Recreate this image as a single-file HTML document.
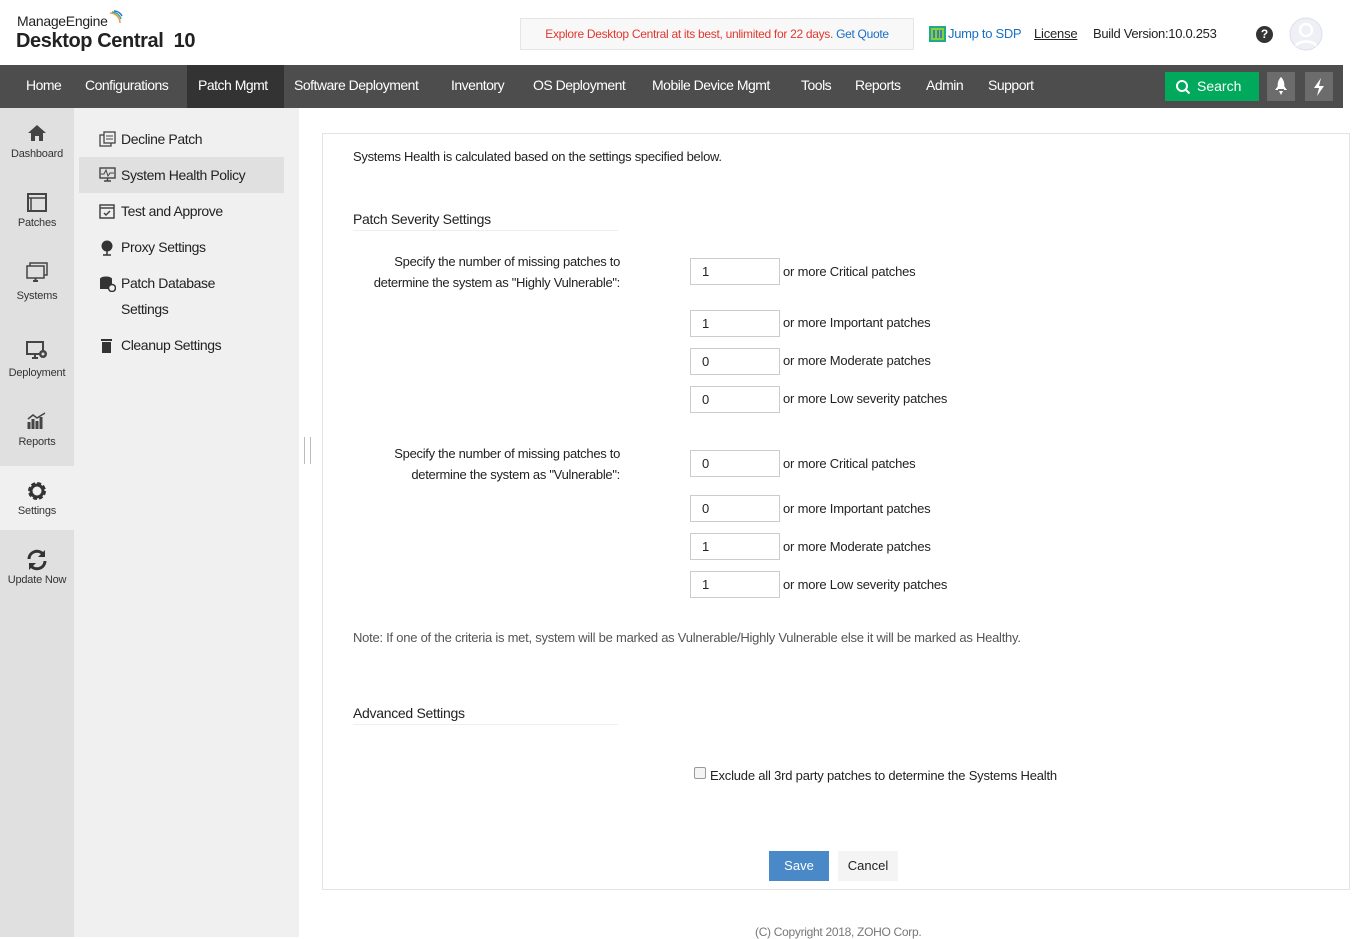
<!DOCTYPE html>
<html><head><meta charset="utf-8"><style>
*{box-sizing:border-box;margin:0;padding:0}
body{width:1360px;height:937px;overflow:hidden;background:#fff;font-family:"Liberation Sans",sans-serif;color:#222;position:relative;font-size:13px}
.a{position:absolute;white-space:nowrap}
.nav{position:absolute;left:0;top:65px;width:1343px;height:43px;background:#4d4d4d}
.nav span{position:absolute;top:0;height:43px;line-height:41px;color:#fff;font-size:14px;letter-spacing:-0.5px}
.lb{position:absolute;left:0;top:108px;width:74px;height:829px;background:#e0e0e0}
.li{position:absolute;left:0;width:74px;text-align:center;font-size:11px;color:#333;letter-spacing:-0.2px}
.sm{position:absolute;left:74px;top:108px;width:225px;height:829px;background:#f0f0f0}
.si{position:absolute;left:121px;font-size:14px;color:#222;letter-spacing:-0.4px}
.panel{position:absolute;left:322px;top:133px;width:1028px;height:757px;border:1px solid #e3e3e3}
.inp{position:absolute;left:690px;width:90px;height:27px;border:1px solid #ccc;padding-left:11px;line-height:25px;font-size:13px}
.lab{position:absolute;left:783px;font-size:13px;letter-spacing:-0.2px}
.r{position:absolute;right:740px;text-align:right;font-size:13px;line-height:21px;letter-spacing:-0.3px}
svg{position:absolute}
</style></head><body>
<div class="a" style="left:17px;top:13px;font-size:14px;color:#222;letter-spacing:-0.3px">ManageEngine</div>
<svg style="left:107px;top:10px" width="16" height="16" viewBox="0 0 16 16"><path d="M3 3 A10 10 0 0 1 13 13" stroke="#e94" stroke-width="1.5" fill="none"/><path d="M5 2 A10 10 0 0 1 14 9" stroke="#3a9" stroke-width="1.5" fill="none"/><path d="M7 1 A9 9 0 0 1 15 6" stroke="#27c" stroke-width="1.5" fill="none"/></svg>
<div class="a" style="left:16px;top:30px;font-size:20px;color:#222;letter-spacing:-0.4px;font-weight:bold;-webkit-text-stroke:0;font-weight:600">Desktop Central&nbsp; 10</div>
<div class="a" style="left:520px;top:18px;width:394px;height:32px;background:#f8f8f8;border:1px solid #e5e5e5;text-align:center;line-height:30px;font-size:12px;color:#e2382f;letter-spacing:-0.3px">Explore Desktop Central at its best, unlimited for 22 days. <span style="color:#1a6fc3">Get Quote</span></div>
<svg style="left:929px;top:26px" width="17" height="16" viewBox="0 0 17 16"><rect x="1" y="1" width="15" height="14" fill="#8c4" stroke="#2a8" stroke-width="2"/><path d="M5 4v8M9 4v8M12 4v8" stroke="#1a6fc3" stroke-width="1.5"/></svg>
<div class="a" style="left:948px;top:26px;font-size:13px;color:#1a6fc3;letter-spacing:-0.3px">Jump to SDP</div>
<div class="a" style="left:1034px;top:26px;font-size:13px;text-decoration:underline;letter-spacing:-0.2px">License</div>
<div class="a" style="left:1093px;top:26px;font-size:13px;letter-spacing:-0.3px">Build Version:10.0.253</div>
<div class="a" style="left:1256px;top:26px;width:17px;height:17px;border-radius:50%;background:#333;color:#fff;font-size:12px;font-weight:bold;text-align:center;line-height:17px">?</div>
<svg style="left:1289px;top:17px" width="34" height="34" viewBox="0 0 34 34"><circle cx="17" cy="17" r="16" fill="#eef0f5" stroke="#dde"/><circle cx="17" cy="13" r="6" fill="none" stroke="#fff" stroke-width="2.5"/><path d="M7 29c2-6 18-6 20 0" fill="none" stroke="#fff" stroke-width="2.5"/></svg>
<div class="nav">
<span style="left:26px">Home</span><span style="left:85px">Configurations</span>
<span style="left:187px;width:97px;background:#333;padding-left:11px">Patch Mgmt</span>
<span style="left:294px">Software Deployment</span><span style="left:451px">Inventory</span><span style="left:533px">OS Deployment</span><span style="left:652px">Mobile Device Mgmt</span><span style="left:801px">Tools</span><span style="left:855px">Reports</span><span style="left:926px">Admin</span><span style="left:988px">Support</span>
<div class="a" style="left:1165px;top:7px;width:94px;height:29px;background:#00a95c;color:#fff;font-size:14px;line-height:29px;padding-left:32px">Search</div>
<svg style="left:1175px;top:14px" width="16" height="16" viewBox="0 0 16 16"><circle cx="7" cy="7" r="5" fill="none" stroke="#fff" stroke-width="2"/><path d="M10.5 10.5l4 4" stroke="#fff" stroke-width="2"/></svg>
<div class="a" style="left:1267px;top:7px;width:28px;height:29px;background:#6c6c6c"></div>
<svg style="left:1273px;top:11px" width="16" height="21" viewBox="0 0 16 21"><path d="M8 1c3 3 4 7 3 12H5C4 8 5 4 8 1z" fill="#fff"/><path d="M5 10l-3 4h3zM11 10l3 4h-3z" fill="#fff"/><path d="M6 15h4l-2 4z" fill="#fff"/></svg>
<div class="a" style="left:1305px;top:7px;width:28px;height:29px;background:#6c6c6c"></div>
<svg style="left:1311px;top:12px" width="16" height="20" viewBox="0 0 16 20"><path d="M10 1L3 11h5l-2 8 7-10H8z" fill="#fff"/></svg>
</div>
<div class="lb"></div>
<div class="a" style="left:0;top:466px;width:74px;height:64px;background:#f0f0f0"></div>
<svg style="left:27px;top:124px" width="20" height="18" viewBox="0 0 20 18"><path d="M10 1L1 9h3v8h4v-5h4v5h4V9h3z" fill="#444"/></svg><div class="li" style="top:148px">Dashboard</div>
<svg style="left:27px;top:193px" width="20" height="19" viewBox="0 0 20 19"><rect x="1" y="1" width="18" height="17" fill="none" stroke="#444" stroke-width="2"/><path d="M1 5h18M4 5v13" stroke="#444" stroke-width="1.5"/></svg><div class="li" style="top:217px">Patches</div>
<svg style="left:26px;top:262px" width="22" height="20" viewBox="0 0 22 20"><rect x="4" y="1" width="17" height="12" fill="none" stroke="#444" stroke-width="1.5"/><rect x="1" y="4" width="17" height="12" fill="#e0e0e0" stroke="#444" stroke-width="1.5"/><path d="M7 19h5M9.5 16v3" stroke="#444" stroke-width="2"/></svg><div class="li" style="top:290px">Systems</div>
<svg style="left:26px;top:341px" width="22" height="19" viewBox="0 0 22 19"><rect x="1" y="1" width="16" height="12" fill="none" stroke="#444" stroke-width="2"/><path d="M6 17h6M9 13v4" stroke="#444" stroke-width="2"/><circle cx="17" cy="13" r="4" fill="#444"/><circle cx="17" cy="13" r="1.5" fill="#e0e0e0"/></svg><div class="li" style="top:367px">Deployment</div>
<svg style="left:27px;top:412px" width="20" height="18" viewBox="0 0 20 18"><path d="M2 17V10M6 17V7M10 17V9M14 17V5" stroke="#444" stroke-width="3"/><path d="M1 7l5-4 4 3 8-5" stroke="#444" stroke-width="1.5" fill="none"/></svg><div class="li" style="top:436px">Reports</div>
<svg style="left:26px;top:480px" width="22" height="22" viewBox="0 0 22 22"><circle cx="11" cy="11" r="7" fill="none" stroke="#333" stroke-width="4" stroke-dasharray="3.5 2"/><circle cx="11" cy="11" r="6" fill="none" stroke="#333" stroke-width="3"/></svg><div class="li" style="top:505px">Settings</div>
<svg style="left:26px;top:549px" width="22" height="22" viewBox="0 0 22 22"><path d="M3 10a8 8 0 0 1 14-5" fill="none" stroke="#333" stroke-width="3"/><path d="M19 1v7h-7z" fill="#333"/><path d="M19 12a8 8 0 0 1-14 5" fill="none" stroke="#333" stroke-width="3"/><path d="M3 21v-7h7z" fill="#333"/></svg><div class="li" style="top:574px">Update Now</div>
<div class="sm"></div>
<div class="a" style="left:79px;top:157px;width:205px;height:36px;background:#e0e0e0"></div>
<svg style="left:99px;top:131px" width="17" height="16" viewBox="0 0 17 16"><rect x="1" y="4" width="11" height="11" fill="none" stroke="#444" stroke-width="1.3"/><rect x="5" y="1" width="11" height="11" fill="#f0f0f0" stroke="#444" stroke-width="1.3"/><path d="M7 5h7M7 8h7" stroke="#444"/></svg><div class="si" style="top:131px">Decline Patch</div>
<svg style="left:99px;top:167px" width="17" height="16" viewBox="0 0 17 16"><rect x="1" y="1" width="15" height="10" fill="none" stroke="#444" stroke-width="1.4"/><path d="M2 7h3l2-4 2 6 2-3h4" stroke="#444" fill="none"/><path d="M5 14h7M8.5 11v3" stroke="#444" stroke-width="1.5"/></svg><div class="si" style="top:167px">System Health Policy</div>
<svg style="left:99px;top:204px" width="16" height="15" viewBox="0 0 16 15"><rect x="1" y="1" width="14" height="13" fill="none" stroke="#444" stroke-width="1.5"/><path d="M1 4h14" stroke="#444" stroke-width="1.5"/><path d="M5 9l2 2 4-4" stroke="#444" stroke-width="1.5" fill="none"/></svg><div class="si" style="top:203px">Test and Approve</div>
<svg style="left:100px;top:240px" width="14" height="16" viewBox="0 0 14 16"><circle cx="7" cy="6" r="5.5" fill="#333"/><path d="M7 11v4M3 15h8" stroke="#333" stroke-width="1.5"/></svg><div class="si" style="top:239px">Proxy Settings</div>
<svg style="left:99px;top:276px" width="17" height="16" viewBox="0 0 17 16"><ellipse cx="7" cy="3" rx="6" ry="2.5" fill="#333"/><rect x="1" y="3" width="12" height="10" fill="#333"/><circle cx="13" cy="12" r="3.5" fill="#f0f0f0" stroke="#333" stroke-width="1.5"/></svg><div class="si" style="top:275px">Patch Database</div><div class="si" style="top:301px">Settings</div>
<svg style="left:101px;top:338px" width="11" height="15" viewBox="0 0 11 15"><rect x="0" y="1" width="11" height="2" fill="#333"/><rect x="1" y="4" width="9" height="11" fill="#333"/></svg><div class="si" style="top:337px">Cleanup Settings</div>
<div class="a" style="left:304px;top:437px;width:7px;height:27px;border-left:1px solid #bbb;border-right:1px solid #bbb"></div>
<div class="panel"></div>
<div class="a" style="left:353px;top:149px;letter-spacing:-0.3px">Systems Health is calculated based on the settings specified below.</div>
<div class="a" style="left:353px;top:211px;font-size:14px;width:265px;height:20px;border-bottom:1px solid #eee;letter-spacing:-0.3px">Patch Severity Settings</div>
<div class="r" style="top:251px">Specify the number of missing patches to<br>determine the system as "Highly Vulnerable":</div>
<div class="inp" style="top:258px">1</div><div class="lab" style="top:264px">or more Critical patches</div>
<div class="inp" style="top:310px">1</div><div class="lab" style="top:315px">or more Important patches</div>
<div class="inp" style="top:348px">0</div><div class="lab" style="top:353px">or more Moderate patches</div>
<div class="inp" style="top:386px">0</div><div class="lab" style="top:391px">or more Low severity patches</div>
<div class="r" style="top:443px">Specify the number of missing patches to<br>determine the system as "Vulnerable":</div>
<div class="inp" style="top:450px">0</div><div class="lab" style="top:456px">or more Critical patches</div>
<div class="inp" style="top:495px">0</div><div class="lab" style="top:501px">or more Important patches</div>
<div class="inp" style="top:533px">1</div><div class="lab" style="top:539px">or more Moderate patches</div>
<div class="inp" style="top:571px">1</div><div class="lab" style="top:577px">or more Low severity patches</div>
<div class="a" style="left:353px;top:630px;color:#555;letter-spacing:-0.25px">Note: If one of the criteria is met, system will be marked as Vulnerable/Highly Vulnerable else it will be marked as Healthy.</div>
<div class="a" style="left:353px;top:705px;font-size:14px;width:265px;height:20px;border-bottom:1px solid #eee;letter-spacing:-0.3px">Advanced Settings</div>
<div class="a" style="left:694px;top:767px;width:12px;height:12px;border:1px solid #999;border-radius:2px;background:#f4f4f4"></div>
<div class="a" style="left:710px;top:768px;letter-spacing:-0.2px">Exclude all 3rd party patches to determine the Systems Health</div>
<div class="a" style="left:769px;top:851px;width:60px;height:30px;background:#4a89c8;color:#fff;text-align:center;line-height:30px">Save</div>
<div class="a" style="left:838px;top:851px;width:60px;height:30px;background:#f4f4f4;text-align:center;line-height:30px">Cancel</div>
<div class="a" style="left:755px;top:925px;font-size:12px;color:#777;letter-spacing:-0.3px">(C) Copyright 2018, ZOHO Corp.</div>
</body></html>
